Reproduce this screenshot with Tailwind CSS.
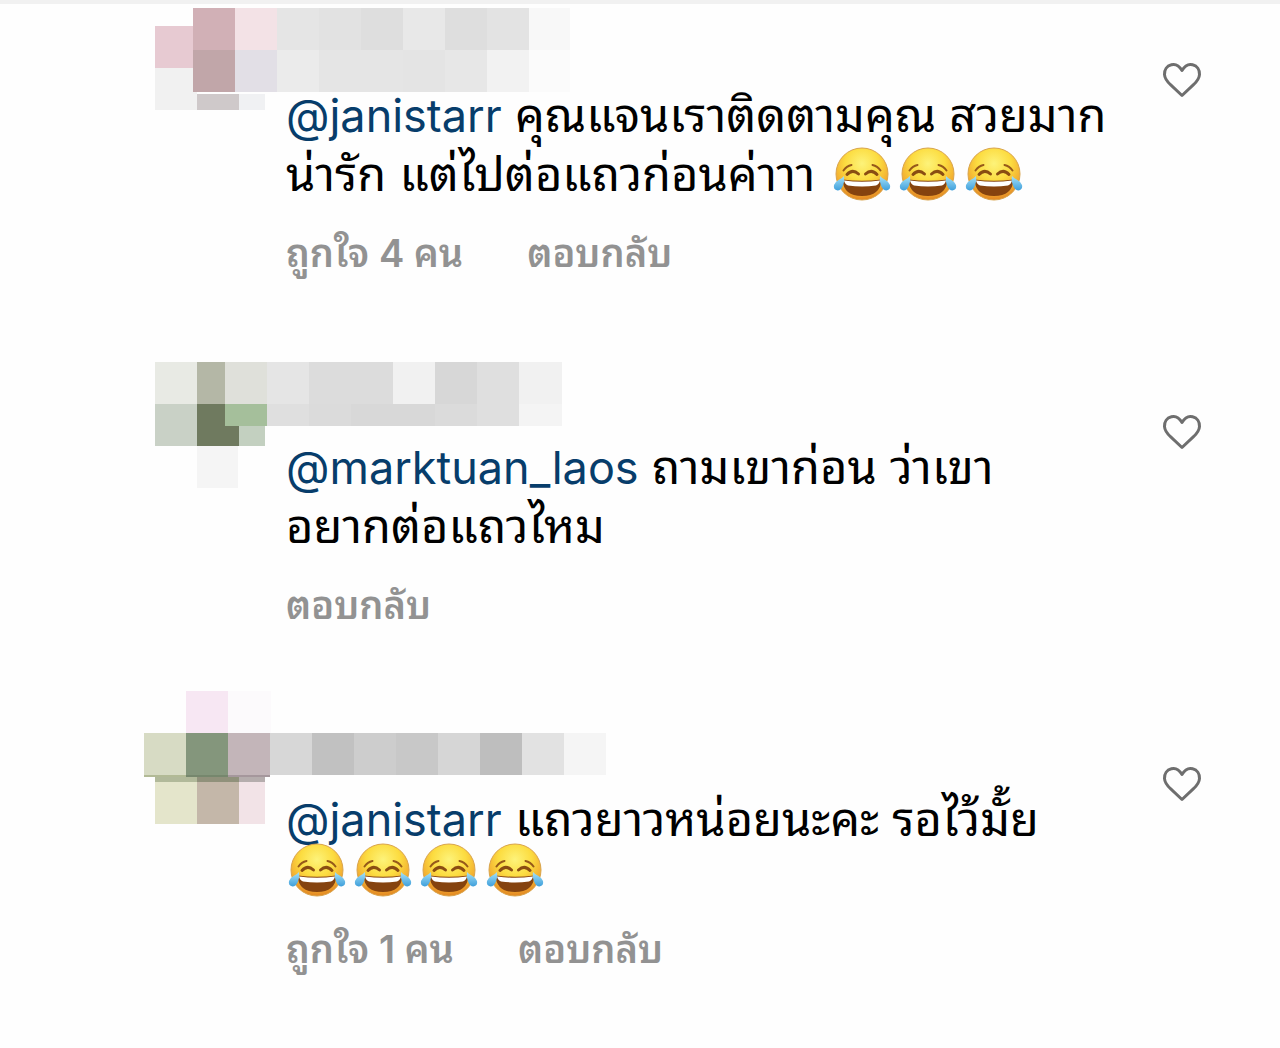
<!DOCTYPE html>
<html lang="th">
<head>
<meta charset="utf-8">
<meta name="viewport" content="width=device-width, initial-scale=1">
<title>ความคิดเห็น</title>
<script src="https://cdn.jsdelivr.net/npm/@tailwindcss/browser@4"></script>
</head>
<body class="min-h-screen bg-[#fefefe] font-['Inter','Noto_Sans_Thai_Looped','Loma','Garuda','Waree','Noto_Sans_Thai','Noto_Sans',sans-serif] text-black">
<svg class="absolute size-0" aria-hidden="true">
  <defs>
    <radialGradient id="face" cx=".5" cy=".3" r=".72">
      <stop offset="0" stop-color="#fdf37a"/><stop offset=".45" stop-color="#fcdc40"/><stop offset=".75" stop-color="#f3b032"/><stop offset="1" stop-color="#e0801f"/>
    </radialGradient>
    <linearGradient id="tear" x1="0" y1="0" x2="0" y2="1">
      <stop offset="0" stop-color="#a5e2f8"/><stop offset="1" stop-color="#3f9fdb"/>
    </linearGradient>
    <symbol id="joy" viewBox="0 0 58 54">
      <circle cx="29" cy="27" r="26" fill="url(#face)" stroke="#d9a44c" stroke-width="1"/>
      <path d="M10.500 23.500q3-4.500 8-5.500M47.500 23.500q-3-4.500-8-5.500" fill="none" stroke="#96591a" stroke-width="2" stroke-linecap="round"/>
      <path d="M14 27.500q5.500-6 11.500-.5M32.500 27q6-5.500 11.500.5" fill="none" stroke="#8a4d12" stroke-width="3" stroke-linecap="round"/>
      <path d="M9.500 32.500q19.500 2.500 39 0q-1 16.500-19.500 16.500q-18.500 0-19.500-16.500z" fill="#85430f"/>
      <path d="M11 33.500q18 2.500 36 0q-1 4-4 5q-14 2-28 0q-3-1-4-5z" fill="#fff"/>
      <path d="M11 29q1 5-1 9.500q-2 5-5.500 5q-4.500-1-3.500-5.500q1-3 4.500-5q3.500-1.500 5.500-4z" fill="url(#tear)"/>
      <path d="M47 29q-1 5 1 9.500q2 5 5.500 5q4.500-1 3.500-5.500q-1-3-4.500-5q-3.500-1.500-5.500-4z" fill="url(#tear)"/>
    </symbol>
    <symbol id="heart" viewBox="0 0 40 40">
      <path d="M20 10.500C17 5.500 12.800 3.700 9.300 4.800C4.800 6 2.300 10 2.500 14.500C2.700 19 5.500 22 9 25.200L20 35.500L31 25.200C34.500 22 37.300 19 37.500 14.500C37.700 10 35.200 6 30.700 4.800C27.200 3.700 23 5.500 20 10.500Z" fill="none" stroke="#6e6e6e" stroke-width="3" stroke-linejoin="round"/>
    </symbol>
  </defs>
</svg>

<main class="border-t-4 border-[#f1f1f1]">
  <article class="relative flex items-start pr-[78px] pb-[77px] pl-[286px]">
    <svg class="absolute top-0 left-[144px] h-[120px] w-[470px]" viewBox="144 4 470 120" shape-rendering="crispEdges" aria-hidden="true">
      <path fill="#e7cad2" d="M155 26h38v42h-38z"/><path fill="#f1f1f1" d="M155 68h42v42h-42z"/>
      <path fill="#d1b0b6" d="M193 8h42v42h-42z"/><path fill="#c1a6a9" d="M193 50h42v42h-42z"/>
      <path fill="#f3e2e6" d="M235 8h42v42h-42z"/><path fill="#e2dfe6" d="M235 50h42v42h-42z"/>
      <path fill="#cfc9ca" d="M197 94h42v16h-42z"/><path fill="#f0f1f3" d="M239 94h26v16h-26z"/>
      <path fill="#e5e5e5" d="M277 8h42v42h-42z"/><path fill="#e2e2e2" d="M319 8h42v42h-42z"/><path fill="#dedede" d="M361 8h42v42h-42z"/><path fill="#e8e8e8" d="M403 8h42v42h-42z"/><path fill="#dedede" d="M445 8h42v42h-42z"/><path fill="#e3e3e3" d="M487 8h42v42h-42z"/><path fill="#f8f8f8" d="M529 8h41v42h-41z"/>
      <path fill="#ebebeb" d="M277 50h42v42h-42z"/><path fill="#e5e5e5" d="M319 50h84v42h-84z"/><path fill="#e4e4e4" d="M403 50h42v42h-42z"/><path fill="#e7e7e7" d="M445 50h42v42h-42z"/><path fill="#f2f2f2" d="M487 50h42v42h-42z"/><path fill="#fbfbfb" d="M529 50h41v42h-41z"/>
    </svg>
    <div class="min-w-0 flex-1 pt-[82px]">
      <p class="text-[47px] leading-[58px] whitespace-nowrap"><a href="#" class="text-[45px] text-[#073d6b]">@janistarr</a> คุณแจนเราติดตามคุณ สวยมาก<br>น่ารัก แต่ไปต่อแถวก่อนค่าาา <span class="-mt-3 -mb-1 ml-1 inline-flex gap-2 align-middle" role="img" aria-label="หัวเราะน้ำตาไหล"><svg class="h-[54px] w-[58px]"><use href="#joy"/></svg><svg class="h-[54px] w-[58px]"><use href="#joy"/></svg><svg class="h-[54px] w-[58px]"><use href="#joy"/></svg></span></p>
      <div class="mt-6 flex gap-16 text-[38px] leading-[52px] font-semibold text-[#929292]"><button type="button">ถูกใจ 4 คน</button><button type="button">ตอบกลับ</button></div>
    </div>
    <button type="button" class="mt-[56px]" aria-label="ถูกใจ"><svg class="size-10"><use href="#heart"/></svg></button>
  </article>

  <article class="relative flex items-start pr-[78px] pb-[77px] pl-[286px]">
    <svg class="absolute top-0 left-[144px] h-[140px] w-[470px]" viewBox="144 356 470 140" shape-rendering="crispEdges" aria-hidden="true">
      <path fill="#e8eae4" d="M155 362h42v42h-42z"/><path fill="#b4b7a6" d="M197 362h28v42h-28z"/><path fill="#dfe0da" d="M225 362h42v42h-42z"/><path fill="#e5e5e5" d="M267 362h42v42h-42z"/><path fill="#dcdcdc" d="M309 362h84v42h-84z"/><path fill="#f1f1f1" d="M393 362h42v42h-42z"/><path fill="#d7d7d7" d="M435 362h42v42h-42z"/><path fill="#dfdfdf" d="M477 362h42v42h-42z"/><path fill="#f1f1f1" d="M519 362h43v42h-43z"/>
      <path fill="#c9d1c6" d="M155 404h42v42h-42z"/><path fill="#6f7a5f" d="M197 404h42v42h-42z"/><path fill="#a5bf9b" d="M225 404h42v22h-42z"/><path fill="#c3d0c0" d="M239 426h26v20h-26z"/><path fill="#f5f5f5" d="M197 446h41v42h-41z"/>
      <path fill="#dfdfdf" d="M267 404h42v22h-42z"/><path fill="#dbdbdb" d="M309 404h42v22h-42z"/><path fill="#d8d8d8" d="M351 404h84v22h-84z"/><path fill="#dbdbdb" d="M435 404h42v22h-42z"/><path fill="#dfdfdf" d="M477 404h42v22h-42z"/><path fill="#f4f4f4" d="M519 404h43v22h-43z"/>
    </svg>
    <div class="min-w-0 flex-1 pt-[82px]">
      <p class="text-[47px] leading-[58px] whitespace-nowrap"><a href="#" class="text-[45px] text-[#073d6b]">@marktuan_laos</a> ถามเขาก่อน ว่าเขา<br>อยากต่อแถวไหม</p>
      <div class="mt-6 flex gap-16 text-[38px] leading-[52px] font-semibold text-[#929292]"><button type="button">ตอบกลับ</button></div>
    </div>
    <button type="button" class="mt-[56px]" aria-label="ถูกใจ"><svg class="size-10"><use href="#heart"/></svg></button>
  </article>

  <article class="relative flex items-start pr-[78px] pl-[286px]">
    <svg class="absolute -top-5 left-[144px] h-[140px] w-[470px]" viewBox="144 688 470 140" shape-rendering="crispEdges" aria-hidden="true">
      <path fill="#f7e7f3" d="M186 691h42v42h-42z"/><path fill="#fcfafc" d="M228 691h43v42h-43z"/>
      <path fill="#d7dbc4" d="M144 733h42v43h-42z"/><path fill="#84967c" d="M186 733h42v43h-42z"/><path fill="#c3b5b9" d="M228 733h42v43h-42z"/><path fill="#d7d7d7" d="M270 733h42v42h-42z"/><path fill="#c1c1c1" d="M312 733h42v42h-42z"/><path fill="#cdcdcd" d="M354 733h42v42h-42z"/><path fill="#c8c8c8" d="M396 733h42v42h-42z"/><path fill="#d6d6d6" d="M438 733h42v42h-42z"/><path fill="#bebebe" d="M480 733h42v42h-42z"/><path fill="#e2e2e2" d="M522 733h42v42h-42z"/><path fill="#f5f5f5" d="M564 733h42v42h-42z"/>
      <path fill="#b2ba96" d="M144 775h42v2h-42z"/><path fill="#76876d" d="M186 775h42v2h-42z"/><path fill="#a5979c" d="M228 775h42v2h-42z"/>
      <path fill="#b1b99a" d="M155 777h42v5h-42z"/><path fill="#90917b" d="M197 777h42v5h-42z"/><path fill="#b5adad" d="M239 777h26v5h-26z"/>
      <path fill="#e4e5cb" d="M155 782h42v42h-42z"/><path fill="#c4b7a9" d="M197 782h42v42h-42z"/><path fill="#f2e3e7" d="M239 782h26v42h-26z"/>
    </svg>
    <div class="min-w-0 flex-1 pt-[82px]">
      <p class="text-[47px] leading-[58px] whitespace-nowrap"><a href="#" class="text-[45px] text-[#073d6b]">@janistarr</a> แถวยาวหน่อยนะคะ รอไว้มั้ย</p>
      <div class="-mt-2 flex h-[58px] items-center gap-2 pl-0.5" role="img" aria-label="หัวเราะน้ำตาไหล"><svg class="h-[54px] w-[58px]"><use href="#joy"/></svg><svg class="h-[54px] w-[58px]"><use href="#joy"/></svg><svg class="h-[54px] w-[58px]"><use href="#joy"/></svg><svg class="h-[54px] w-[58px]"><use href="#joy"/></svg></div>
      <div class="mt-6 flex gap-16 text-[38px] leading-[52px] font-semibold text-[#929292]"><button type="button">ถูกใจ 1 คน</button><button type="button">ตอบกลับ</button></div>
    </div>
    <button type="button" class="mt-[56px]" aria-label="ถูกใจ"><svg class="size-10"><use href="#heart"/></svg></button>
  </article>
</main>
</body>
</html>
